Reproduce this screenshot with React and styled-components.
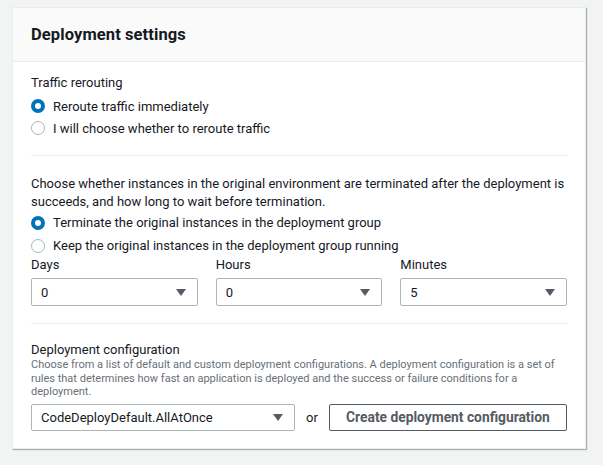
import React from "react";
import styled, { createGlobalStyle } from "styled-components";

const Global = createGlobalStyle`
  html, body { margin: 0; padding: 0; background: #f2f3f3; }
  body { font-family: Roboto, "Noto Sans", Arial, sans-serif; color: #16191f; }
  * { box-sizing: border-box; }
`;

const Page = styled.div`
  width: 603px;
  height: 465px;
  padding: 7px 17px 0 12px;
`;

const Panel = styled.section`
  background: #fff;
  border: 1px solid #eaeded;
  box-shadow: 1px 1px 1px 0 rgba(0, 28, 36, 0.3);
  width: 574px;
`;

const Header = styled.header`
  background: #fafafa;
  border-bottom: 1px solid #eaeded;
  height: 54px;
  display: flex;
  align-items: center;
  padding: 0 18px;
`;

const Title = styled.h2`
  margin: 0;
  font-size: 16.5px;
  font-weight: 700;
  color: #16191f;
  letter-spacing: 0.1px;
`;

const Body = styled.div`
  padding: 12px 18px 17px 18px;
`;

const Section = styled.div`
  display: flex;
  flex-direction: column;
`;

const Divider = styled.hr`
  border: 0;
  border-top: 1px solid #eaeded;
  margin: ${(p) => p.$m || "0"};
`;

const Label = styled.div`
  font-size: 13px;
  line-height: ${(p) => p.$lh || "18px"};
  margin-bottom: ${(p) => p.$mb || "0"};
  color: #16191f;
`;

const Paragraph = styled.p`
  margin: 0;
  font-size: 13px;
  line-height: 18px;
  color: #16191f;
`;

const Hint = styled.p`
  margin: 0;
  font-size: 11px;
  line-height: 13.5px;
  color: #687078;
`;

const RadioRow = styled.label`
  display: flex;
  align-items: center;
  gap: 8px;
  height: ${(p) => p.$h || "22px"};
  font-size: 13px;
  color: #16191f;
`;

const RadioDot = styled.span`
  width: 14px;
  height: 14px;
  border-radius: 50%;
  flex: none;
  border: ${(p) => (p.$checked ? "4px solid #0073bb" : "1px solid #aab7b8")};
  background: #fff;
`;

const Grid = styled.div`
  display: grid;
  grid-template-columns: repeat(3, 1fr);
  column-gap: 18px;
`;

const Field = styled.div`
  display: flex;
  flex-direction: column;
  gap: 5px;
`;

const Select = styled.div`
  height: ${(p) => p.$h || "28px"};
  width: ${(p) => p.$w || "auto"};
  border: 1px solid #aab7b8;
  border-radius: 2px;
  display: flex;
  align-items: center;
  justify-content: space-between;
  padding: 0 11px 0 9px;
  font-size: 13px;
  color: #16191f;
  background: #fff;
`;

const Caret = styled.span`
  width: 0;
  height: 0;
  border-left: 5.5px solid transparent;
  border-right: 5.5px solid transparent;
  border-top: 7px solid #545b64;
`;

const ConfigRow = styled.div`
  display: flex;
  align-items: center;
  margin-top: 5px;
`;

const Or = styled.span`
  font-size: 13px;
  color: #16191f;
  margin: 0 11px;
`;

const Button = styled.button`
  flex: 1;
  height: 27px;
  border: 1px solid #545b64;
  border-radius: 2px;
  background: #fff;
  color: #545b64;
  font-family: inherit;
  font-weight: 700;
  font-size: 13.8px;
  padding: 0;
`;

const Radio = ({ checked, children, h }) => (
  <RadioRow $h={h}>
    <RadioDot $checked={checked} />
    {children}
  </RadioRow>
);

export default function App() {
  return (
    <Page>
      <Global />
      <Panel>
        <Header>
          <Title>Deployment settings</Title>
        </Header>
        <Body>
          <Section>
            <Label $mb="3px">Traffic rerouting</Label>
            <Radio checked>Reroute traffic immediately</Radio>
            <Radio>I will choose whether to reroute traffic</Radio>
          </Section>
          <Divider $m="16px 0 19px" />
          <Section>
            <Paragraph>
              Choose whether instances in the original environment are terminated after the deployment is
              succeeds, and how long to wait before termination.
            </Paragraph>
            <Radio checked h="23px">Terminate the original instances in the deployment group</Radio>
            <Radio h="23px">Keep the original instances in the deployment group running</Radio>
            <Grid>
              <Field>
                <Label $lh="16px">Days</Label>
                <Select>0<Caret /></Select>
              </Field>
              <Field>
                <Label $lh="16px">Hours</Label>
                <Select>0<Caret /></Select>
              </Field>
              <Field>
                <Label $lh="16px">Minutes</Label>
                <Select>5<Caret /></Select>
              </Field>
            </Grid>
          </Section>
          <Divider $m="17px 0 17px" />
          <Section>
            <Label $lh="17px">Deployment configuration</Label>
            <Hint>
              Choose from a list of default and custom deployment configurations. A deployment configuration is a set of
              rules that determines how fast an application is deployed and the success or failure conditions for a
              deployment.
            </Hint>
            <ConfigRow>
              <Select $w="264px" $h="27px">CodeDeployDefault.AllAtOnce<Caret /></Select>
              <Or>or</Or>
              <Button>Create deployment configuration</Button>
            </ConfigRow>
          </Section>
        </Body>
      </Panel>
    </Page>
  );
}
